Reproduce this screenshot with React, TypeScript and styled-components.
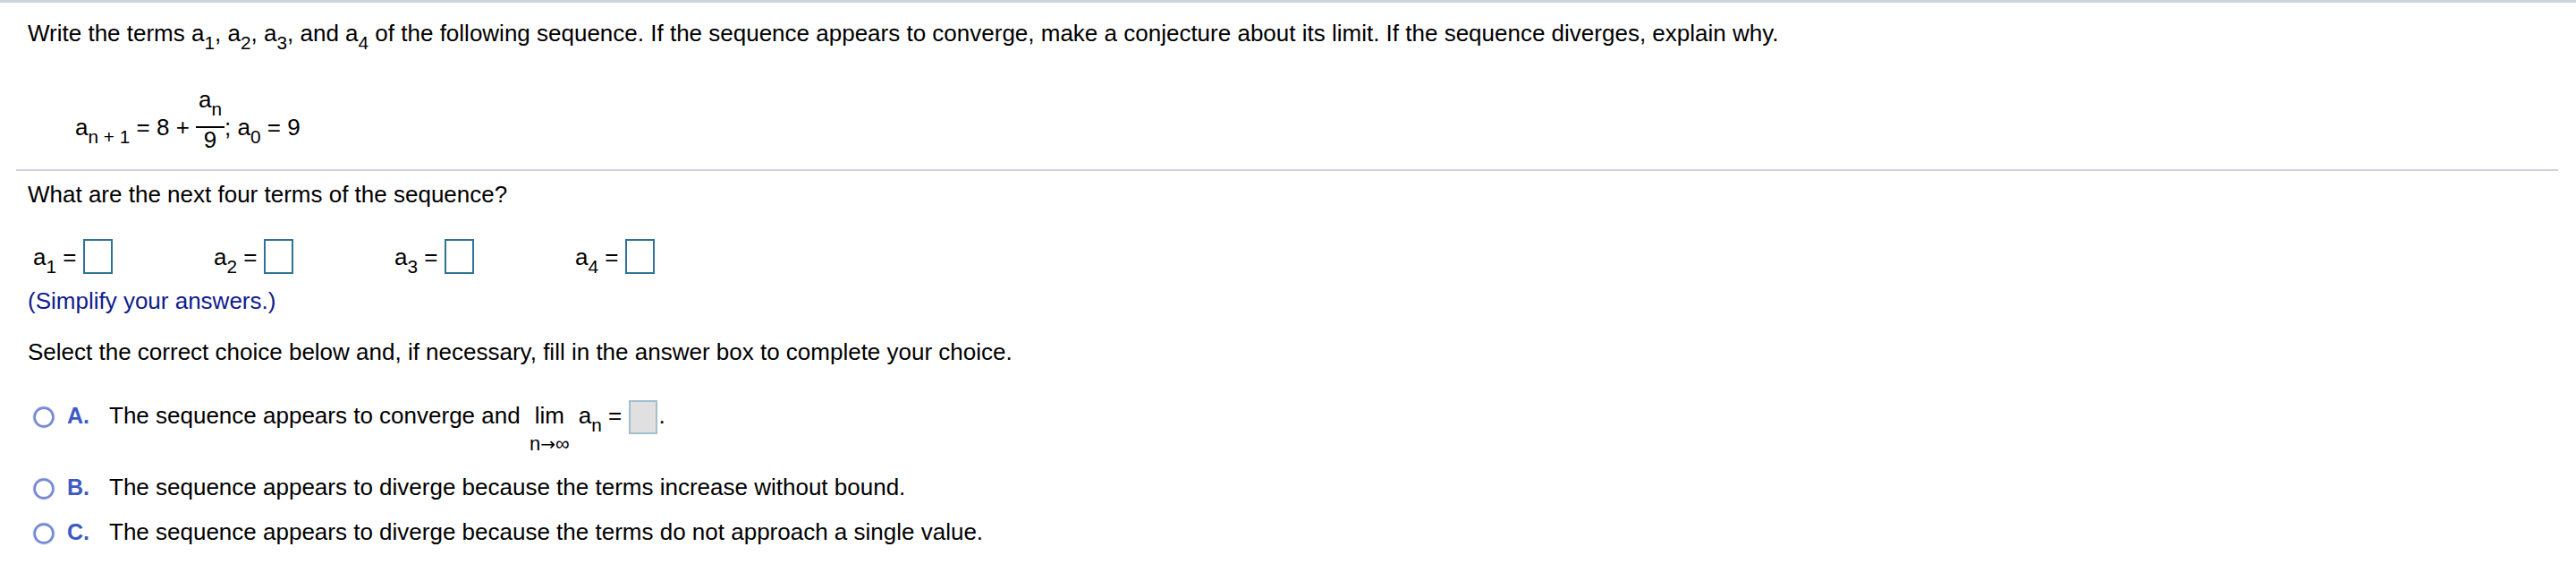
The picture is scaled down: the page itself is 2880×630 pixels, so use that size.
import React from "react";
import styled, { createGlobalStyle } from "styled-components";

const Global = createGlobalStyle`
  html, body { margin: 0; padding: 0; background: #ffffff; }
  body {
    font-family: "Liberation Sans", Arial, "DejaVu Sans", sans-serif;
    color: #000000;
    font-size: 26px;
  }
`;

const Page = styled.div`
  width: 2880px;
  height: 630px;
  overflow: hidden;
  box-sizing: border-box;
  border-top: 3px solid #cfd3de;
`;

const Intro = styled.div`
  padding: 19px 0 0 31px;
`;

const Line = styled.div<{ $mt?: number }>`
  line-height: 30px;
  white-space: nowrap;
  margin-top: ${(p) => p.$mt ?? 0}px;
`;

const Sub = styled.sub`
  font-size: 0.8em;
  vertical-align: -0.42em;
  line-height: 0;
`;

const FormulaRow = styled.div`
  display: flex;
  align-items: center;
  margin: 46px 0 3px 53px;
  white-space: pre;
`;

const Seg = styled.span`
  line-height: 30px;
`;

const Frac = styled.span`
  display: inline-flex;
  flex-direction: column;
  align-items: center;
`;

const FracPart = styled.span`
  line-height: 26px;
  padding-bottom: 17px;
`;

const FracBar = styled.span`
  width: 32px;
  height: 2px;
  background: #000000;
`;

const Divider = styled.div`
  margin: 0 20px 0 18px;
  height: 2px;
  background: #cfd3de;
`;

const Body = styled.div`
  padding-left: 31px;
`;

const AnswerRow = styled.div`
  display: grid;
  grid-template-columns: repeat(4, 202px);
  margin-top: 35px;
  padding-left: 6px;
`;

const Cell = styled.div`
  display: flex;
  align-items: center;
  line-height: 30px;
`;

const CellLabel = styled.span`
  white-space: pre;
`;

const AnswerBox = styled.span`
  display: inline-block;
  box-sizing: border-box;
  width: 33px;
  height: 39px;
  border: 2px solid #2f7494;
  background: #ffffff;
`;

const Hint = styled(Line)`
  color: #101c8c;
`;

const Choice = styled.div<{ $mt: number }>`
  display: flex;
  align-items: flex-start;
  margin-top: ${(p) => p.$mt}px;
  padding-left: 5px;
`;

const Radio = styled.svg`
  width: 26px;
  height: 26px;
  margin-top: 4px;
  flex: none;
`;

const Letter = styled.span`
  width: 47px;
  margin-left: 13px;
  font-weight: bold;
  font-size: 25px;
  line-height: 30px;
  color: #3c5ac6;
`;

const ChoiceText = styled.span`
  line-height: 30px;
  white-space: pre;
`;

const Lim = styled.span`
  display: inline-flex;
  flex-direction: column;
  align-items: center;
  vertical-align: top;
  margin: 0 3px;
`;

const LimWord = styled.span`
  line-height: 30px;
`;

const LimUnder = styled.span`
  font-size: 22px;
  line-height: 22px;
  margin-top: 6px;
  white-space: nowrap;
`;

const Arrow = styled.span`
  font-family: "DejaVu Sans", sans-serif;
  font-size: 20px;
`;

const BlankBox = styled.span`
  display: inline-block;
  box-sizing: border-box;
  width: 32px;
  height: 38px;
  margin: -8px 2px -8px 0;
  vertical-align: middle;
  border: 2px solid #a2bfce;
  background: #e0e0e0;
`;

const RadioIcon = () => (
  <Radio viewBox="0 0 26 26">
    <circle cx="13" cy="13" r="12" fill="none" stroke="#e6e9f6" strokeWidth="1.5" />
    <circle cx="13" cy="13" r="10.4" fill="#ffffff" stroke="#7689d5" strokeWidth="2.6" />
  </Radio>
);

const terms = ["1", "2", "3", "4"];

export default function App() {
  return (
    <>
      <Global />
      <Page>
        <Intro>
          <Line>
            Write the terms a<Sub>1</Sub>, a<Sub>2</Sub>, a<Sub>3</Sub>, and a<Sub>4</Sub> of the following
            sequence. If the sequence appears to converge, make a conjecture about its limit. If the
            sequence diverges, explain why.
          </Line>
          <FormulaRow>
            <Seg>
              a<Sub>n + 1</Sub> = 8 +{" "}
            </Seg>
            <Frac>
              <FracPart>
                a<Sub>n</Sub>
              </FracPart>
              <FracBar />
              <FracPart>9</FracPart>
            </Frac>
            <Seg>
              ; a<Sub>0</Sub> = 9
            </Seg>
          </FormulaRow>
        </Intro>
        <Divider />
        <Body>
          <Line $mt={11}>What are the next four terms of the sequence?</Line>
          <AnswerRow>
            {terms.map((t) => (
              <Cell key={t}>
                <CellLabel>
                  a<Sub>{t}</Sub> ={" "}
                </CellLabel>
                <AnswerBox />
              </Cell>
            ))}
          </AnswerRow>
          <Hint $mt={15}>(Simplify your answers.)</Hint>
          <Line $mt={27}>Select the correct choice below and, if necessary, fill in the answer box to complete your choice.</Line>
          <Choice $mt={41}>
            <RadioIcon />
            <Letter>A.</Letter>
            <ChoiceText>
              The sequence appears to converge and{" "}
              <Lim>
                <LimWord>lim</LimWord>
                <LimUnder>
                  n<Arrow>→</Arrow>∞
                </LimUnder>
              </Lim>{" "}
              a<Sub>n</Sub> = <BlankBox />.
            </ChoiceText>
          </Choice>
          <Choice $mt={22}>
            <RadioIcon />
            <Letter>B.</Letter>
            <ChoiceText>The sequence appears to diverge because the terms increase without bound.</ChoiceText>
          </Choice>
          <Choice $mt={20}>
            <RadioIcon />
            <Letter>C.</Letter>
            <ChoiceText>The sequence appears to diverge because the terms do not approach a single value.</ChoiceText>
          </Choice>
        </Body>
      </Page>
    </>
  );
}
